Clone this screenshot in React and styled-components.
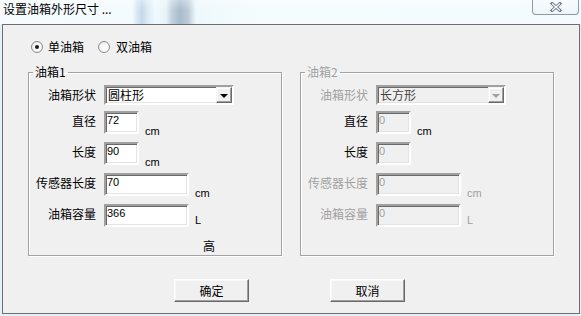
import React from 'react';
import styled, { createGlobalStyle } from 'styled-components';

const GlobalStyle = createGlobalStyle`
  html, body {
    margin: 0;
    padding: 0;
  }
  body {
    width: 581px;
    height: 316px;
    overflow: hidden;
    background: #e4f2f7;
    font-family: "Noto Sans CJK SC", "Microsoft YaHei", sans-serif;
    font-size: 12px;
    color: #000;
  }
`;

const Window = styled.div`
  width: 581px;
  height: 316px;
  display: flex;
  flex-direction: column;
`;

const TitleBar = styled.div`
  height: 24px;
  display: flex;
  justify-content: space-between;
  align-items: flex-start;
  background:
    linear-gradient(180deg, rgba(255, 255, 255, 0.35) 0px, rgba(255, 255, 255, 0) 10px),
    linear-gradient(
      90deg,
      #f6fcfe 0px,
      #f3fbfe 132px,
      #d8e8f3 137px,
      #c4d9e9 142px,
      #d8e8f3 147px,
      #eff9fd 155px,
      #e8f3f8 166px,
      #c1d0dc 172px,
      #a8bbcc 180px,
      #bccbd8 188px,
      #eef8fc 196px,
      #f5fcfe 260px,
      #f3fbfe 581px
    );
`;

const Title = styled.div`
  padding: 1px 0 0 3px;
  line-height: 16px;
  white-space: nowrap;
`;

const CloseButton = styled.div`
  width: 47px;
  height: 15px;
  margin-right: 2px;
  box-sizing: border-box;
  border: 1px solid #8d9aa6;
  border-top: none;
  border-radius: 0 0 4px 4px;
  background: linear-gradient(180deg, #f7fbfd, #eef5f9);
  display: flex;
  align-items: center;
  justify-content: center;
`;

const Client = styled.div`
  margin-left: 2px;
  width: 578px;
  height: 290px;
  box-sizing: border-box;
  border: 1px solid #6f6f6f;
  background: #f0f0f0;
  display: flex;
  flex-direction: column;
`;

const RadioRow = styled.div`
  display: flex;
  align-items: center;
  height: 16px;
  margin-top: 14px;
  padding-left: 28px;
`;

const RadioLabel = styled.label`
  display: flex;
  align-items: center;
  gap: ${({ $gap }) => $gap}px;
  margin-right: 14px;
  line-height: 16px;
`;

const RadioCircle = styled.span`
  width: 12px;
  height: 12px;
  box-sizing: border-box;
  border-radius: 50%;
  border: 1px solid #8a8a8a;
  background: radial-gradient(circle at 60% 60%, #ffffff 0%, #f4f4f4 55%, #d9d9d9 100%);
  display: flex;
  align-items: center;
  justify-content: center;

  &::after {
    content: '';
    width: 4px;
    height: 4px;
    border-radius: 50%;
    background: ${({ $checked }) => ($checked ? '#1a1a1a' : 'transparent')};
  }
`;

const Groups = styled.div`
  display: flex;
  gap: 18px;
  margin-top: 10px;
  padding-left: 25px;
`;

const Group = styled.fieldset`
  width: 254px;
  box-sizing: border-box;
  margin: 0;
  padding: 0 0 1px 0;
  min-width: 0;
  border: 1px solid #a3a3a3;
  box-shadow: 1px 1px 0 #fff, inset 1px 1px 0 #fff;
`;

const Legend = styled.legend`
  margin-left: 4px;
  padding: 0 2px;
  line-height: 14px;
  color: ${({ $disabled }) => ($disabled ? '#a0a0a0' : '#000')};
`;

const Form = styled.div`
  display: grid;
  grid-template-columns: 67px 1fr;
  column-gap: 8px;
  row-gap: 8px;
  margin-top: 6px;
`;

const Label = styled.div`
  text-align: right;
  line-height: 16px;
  padding-top: 2px;
  white-space: nowrap;
  color: ${({ $dim }) => ($dim ? '#a0a0a0' : '#000')};
`;

const Field = styled.div`
  display: flex;
  align-items: flex-end;
  gap: 6px;
`;

const sunken = `
  border: 2px solid;
  border-color: #a0a0a0 #ffffff #ffffff #a0a0a0;
  box-shadow: inset 1px 1px 0 #696969, inset -1px -1px 0 #e3e3e3;
`;

const Combo = styled.div`
  width: 130px;
  height: 20px;
  margin-bottom: -2px;
  box-sizing: border-box;
  ${sunken}
  background: ${({ $disabled }) => ($disabled ? '#f0f0f0' : '#fff')};
  color: ${({ $disabled }) => ($disabled ? '#444' : '#000')};
  display: flex;
  align-items: center;
  justify-content: space-between;
  padding-left: 2px;
  line-height: 16px;
`;

const DropButton = styled.span`
  width: 16px;
  height: 16px;
  box-sizing: border-box;
  border: 1px solid;
  border-color: #f4f4f4 #696969 #696969 #f4f4f4;
  box-shadow: inset -1px -1px 0 #a0a0a0, inset 1px 1px 0 #fff;
  background: #f0f0f0;
  display: flex;
  align-items: center;
  justify-content: center;

  &::after {
    content: '';
    border-left: 4px solid transparent;
    border-right: 4px solid transparent;
    border-top: 4px solid ${({ $disabled }) => ($disabled ? '#a0a0a0' : '#000')};
    margin-top: 1px;
  }
`;

const Input = styled.input`
  width: ${({ $w }) => $w}px;
  height: 23px;
  box-sizing: border-box;
  margin: 0;
  ${sunken}
  padding: 1px 2px 6px 1px;
  font-family: "Liberation Sans", Arial, sans-serif;
  font-size: 11px;
  line-height: 12px;
  outline: none;
  background: ${({ disabled }) => (disabled ? '#f0f0f0' : '#fff')};
  color: ${({ disabled }) => (disabled ? '#a0a0a0' : '#000')};
`;

const Unit = styled.span`
  font-family: "Liberation Sans", Arial, sans-serif;
  font-size: 11px;
  line-height: 12px;
  margin-bottom: ${({ $raise }) => ($raise ? 1 : -3)}px;
  color: ${({ $dim }) => ($dim ? '#a0a0a0' : '#000')};
`;

const Note = styled.div`
  margin-top: 11px;
  padding-left: 174px;
  line-height: 16px;
`;

const ButtonRow = styled.div`
  display: flex;
  justify-content: center;
  gap: 81px;
  margin-top: 23px;
  padding-right: 3px;
`;

const Button = styled.button`
  width: 75px;
  height: 23px;
  box-sizing: border-box;
  margin: 0;
  padding: 0;
  border: 1px solid;
  border-color: #ffffff #696969 #696969 #ffffff;
  box-shadow: inset -1px -1px 0 #a0a0a0, inset 1px 1px 0 #f8f8f8;
  background: #f0f0f0;
  font-family: "Noto Sans CJK SC", "Microsoft YaHei", sans-serif;
  font-size: 12px;
  line-height: 16px;
  color: #000;
`;

const tanks = [
  {
    name: '油箱1',
    shape: '圆柱形',
    disabled: false,
    diameter: '72',
    length: '90',
    sensor: '70',
    volume: '366',
  },
  {
    name: '油箱2',
    shape: '长方形',
    disabled: true,
    diameter: '0',
    length: '0',
    sensor: '0',
    volume: '0',
  },
];

const TankGroup = ({ tank }) => {
  const off = tank.disabled;
  return (
    <Group>
      <Legend $disabled={off}>{tank.name}</Legend>
      <Form>
        <Label $dim={off}>油箱形状</Label>
        <Field>
          <Combo $disabled={off}>
            <span>{tank.shape}</span>
            <DropButton $disabled={off} />
          </Combo>
        </Field>

        <Label>直径</Label>
        <Field>
          <Input $w={35} disabled={off} readOnly value={tank.diameter} />
          <Unit>cm</Unit>
        </Field>

        <Label>长度</Label>
        <Field>
          <Input $w={35} disabled={off} readOnly value={tank.length} />
          {!off && <Unit>cm</Unit>}
        </Field>

        <Label $dim={off}>传感器长度</Label>
        <Field>
          <Input $w={85} disabled={off} readOnly value={tank.sensor} />
          <Unit $dim={off}>cm</Unit>
        </Field>

        <Label $dim={off}>油箱容量</Label>
        <Field>
          <Input $w={85} disabled={off} readOnly value={tank.volume} />
          <Unit $dim={off} $raise>L</Unit>
        </Field>
      </Form>
      {!off && <Note>高</Note>}
    </Group>
  );
};

const App = () => {
  return (
    <Window>
      <GlobalStyle />
      <TitleBar>
        <Title>设置油箱外形尺寸 ...</Title>
        <CloseButton>
          <svg width="12" height="10" viewBox="0 0 12 10">
            <path d="M2 1.5 L10 8.5 M10 1.5 L2 8.5" stroke="#6b7986" strokeWidth="3" strokeLinecap="square" fill="none" />
            <path d="M2 1.5 L10 8.5 M10 1.5 L2 8.5" stroke="#fff" strokeWidth="1.2" fill="none" />
          </svg>
        </CloseButton>
      </TitleBar>
      <Client>
        <RadioRow>
          <RadioLabel $gap={5}>
            <RadioCircle $checked />
            单油箱
          </RadioLabel>
          <RadioLabel $gap={6}>
            <RadioCircle />
            双油箱
          </RadioLabel>
        </RadioRow>
        <Groups>
          {tanks.map((t) => (
            <TankGroup key={t.name} tank={t} />
          ))}
        </Groups>
        <ButtonRow>
          <Button>确定</Button>
          <Button>取消</Button>
        </ButtonRow>
      </Client>
    </Window>
  );
};

export default App;
